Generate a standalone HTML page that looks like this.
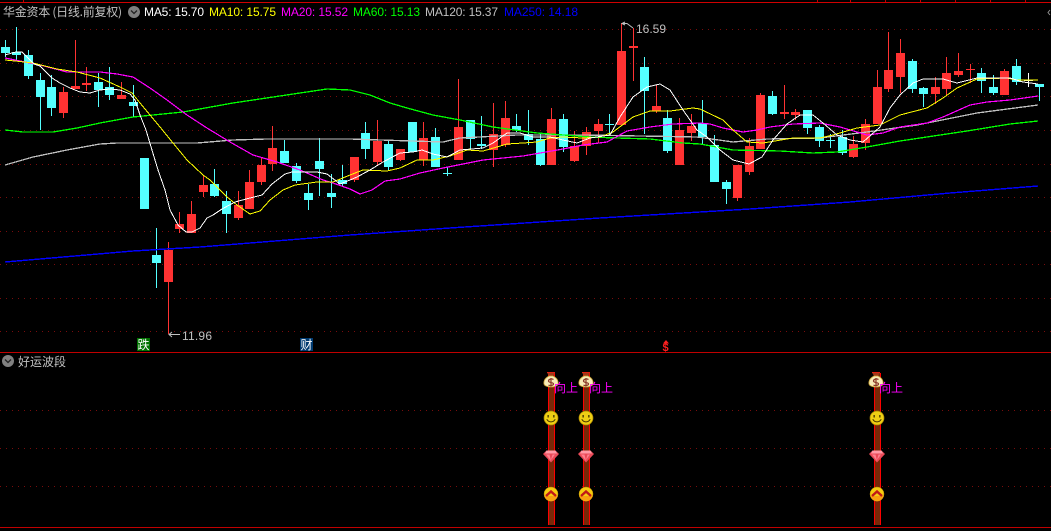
<!DOCTYPE html>
<html><head><meta charset="utf-8">
<style>
html,body{margin:0;padding:0;background:#000;width:1051px;height:531px;overflow:hidden}
svg{position:absolute;left:0;top:0;display:block}
text{font-family:"Liberation Sans","WenQuanYi Zen Hei",sans-serif;font-size:12px}
.cj{font-family:"WenQuanYi Zen Hei","Noto Sans CJK SC",sans-serif}
</style></head>
<body>
<svg width="1051" height="531" viewBox="0 0 1051 531" xmlns="http://www.w3.org/2000/svg">
<defs>
<g id="bag">
<path d="M-4 -9.500H4L2 -6H-2Z" fill="#a03818"/><path d="M-4 -9.500H4" stroke="#e02010" stroke-width="1"/>
<path d="M-2 -6H2C6 -4 7.500 -1 7 2C6 6 -6 6 -7 2C-7.500 -1 -6 -4 -2 -6Z" fill="#f8ecb8" stroke="#c8a030" stroke-width=".8"/>
<path d="M2.500 -2.500C1 -3.500 -2.500 -3 -2.500 -1C-2.500 1 2.500 0 2.500 2C2.500 3.500 -1 4 -2.500 3M0 -4V4.500" fill="none" stroke="#8a3828" stroke-width="1.200"/>
</g>
<g id="smile">
<circle r="7" fill="#efcf14" stroke="#a88400" stroke-width=".7"/>
<rect x="-3.500" y="-3" width="1.300" height="2.500" fill="#403000"/><rect x="2.200" y="-3" width="1.300" height="2.500" fill="#403000"/>
<path d="M-4.200 1.200C-2.500 4.800 2.500 4.800 4.200 1.200" fill="none" stroke="#403000" stroke-width="1"/>
</g>
<g id="gem">
<path d="M-4.500 -5.500H4.500L8 -2L0 6.500L-8 -2Z" fill="#ea4a58"/>
<path d="M-4.500 -5.500H4.500L6 -2.500H-6Z" fill="#ff9aa6"/>
<path d="M-5 -1.500L0 5L-1.500 -1.500ZM1.500 -1.500L0 4L4 -1.500Z" fill="#ff7f8e"/>
</g>
<g id="chev">
<circle r="7" fill="#f6cc10" stroke="#b88a00" stroke-width=".5"/>
<path d="M-6.800 2A7 7 0 0 0 6.800 2Z" fill="#f8a010"/>
<path d="M-5 2L0 -2.500L5 2" fill="none" stroke="#c01818" stroke-width="2.400"/>
</g>
<g id="rod">
<rect x="0" y="0" width="7" height="152" fill="#782808"/>
<rect x="0" y="0" width="1" height="152" fill="#ff0000"/><rect x="6" y="0" width="1" height="152" fill="#ff0000"/>
</g>
</defs>

<!-- frame -->
<rect x="0" y="2" width="1051" height="1" fill="#d00000"/>
<rect x="0" y="352" width="1051" height="1" fill="#c00000"/>
<rect x="0" y="527" width="1051" height="1" fill="#c00000"/>
<path d="M23.500 0V2M817.500 0V2M850.500 0V2M885.500 0V2M920.500 0V2M955.500 0V2M990.500 0V2M1025.500 0V2" stroke="#c00000"/>
<path d="M1050 10L1048 12.500L1050 15" fill="none" stroke="#909090"/>

<!-- grid -->
<path d="M0 29.500H1051M0 63.500H1051M0 96.500H1051M0 130.500H1051M0 164.500H1051M0 197.500H1051M0 231.500H1051M0 264.500H1051M0 298.500H1051M0 331.500H1051M0 410.500H1051M0 448.500H1051M0 486.500H1051" stroke="#7a0c0c" stroke-width="1" stroke-dasharray="1 5" fill="none"/>

<!-- cyan candles -->
<path fill="none" stroke="#54ffff" stroke-width="1" d="M5.500 40V57M16.500 27V60M28.500 50V79M40.500 73V130M51.500 75V116M98.500 73V107M109.500 67V100M133.500 85V117M156.500 228V288M214.500 169V197M226.500 191V233M284.500 140V163M296.500 163V183M308.500 184V210M319.500 138V196M331.500 174V208M342.500 165V187M365.500 122V159M388.500 141V171M412.500 122V152M435.500 128V167M447.500 167V176M470.500 120V149M481.500 116V149M516.500 114V132M528.500 110V145M540.500 134V166M563.500 114V152M609.500 114V135M644.500 57V134M667.500 110V153M702.500 100V144M714.500 135V182M726.500 180V204M772.500 91V115M807.500 110V134M819.500 125V147M830.500 134V148M842.500 130V155M912.500 59V93M923.500 87V107M981.500 68V93M993.500 75V95M1016.500 59V85M1039.500 84V101"/>
<path fill="#54ffff" d="M1 47h9V53h-9zM12 52h9V55h-9zM24 55h9V76h-9zM36 80h9V97h-9zM47 87h9V108h-9zM94 82h9V90h-9zM105 87h9V95h-9zM129 102h9V106h-9zM140 158h9V209h-9zM152 255h9V263h-9zM210 184h9V196h-9zM222 201h9V214h-9zM280 151h9V163h-9zM292 166h9V181h-9zM304 193h9V200h-9zM315 161h9V169h-9zM327 193h9V197h-9zM338 180h9V184h-9zM361 133h9V149h-9zM384 144h9V167h-9zM408 122h9V152h-9zM431 137h9V167h-9zM443 173h9V174h-9zM466 120h9V139h-9zM477 144h9V146h-9zM512 126h9V130h-9zM524 134h9V140h-9zM536 139h9V165h-9zM559 119h9V147h-9zM605 124h9V125h-9zM640 67h9V91h-9zM663 118h9V151h-9zM698 123h9V137h-9zM710 145h9V182h-9zM722 182h9V189h-9zM768 96h9V114h-9zM803 110h9V128h-9zM815 127h9V141h-9zM826 140h9V141h-9zM838 137h9V153h-9zM908 61h9V89h-9zM919 88h9V94h-9zM977 73h9V81h-9zM989 87h9V93h-9zM1012 66h9V82h-9zM1035 84h9V87h-9z"/>

<!-- red candles -->
<path fill="none" stroke="#ff3232" stroke-width="1" d="M63.500 87V118M75.500 40V89M86.500 67V91M121.500 82V99M168.500 242V334M179.500 212V233M191.500 201V233M203.500 175V197M238.500 191V220M249.500 170V209M261.500 158V185M272.500 126V171M354.500 157V182M377.500 120V165M400.500 149V161M423.500 122V166M458.500 79V160M493.500 103V167M505.500 101V147M551.500 108V165M574.500 131V162M586.500 127V155M598.500 119V143M621.500 23V125M633.500 28V81M656.500 85V113M679.500 118V165M691.500 114V141M737.500 165V201M749.500 138V175M760.500 93V149M784.500 85V119M795.500 109V120M853.500 136V158M865.500 119V150M877.500 70V124M888.500 32V92M900.500 39V93M935.500 77V104M946.500 57V95M958.500 53V77M970.500 64V83M1004.500 69V95"/>
<path fill="#ff3232" d="M59 92h9V113h-9zM71 86h9V89h-9zM82 83h9V85h-9zM117 95h9V99h-9zM164 250h9V282h-9zM175 224h9V229h-9zM187 214h9V233h-9zM199 185h9V192h-9zM234 205h9V218h-9zM245 182h9V209h-9zM257 165h9V182h-9zM268 148h9V164h-9zM350 157h9V180h-9zM373 141h9V162h-9zM396 149h9V160h-9zM419 138h9V160h-9zM454 127h9V160h-9zM489 134h9V150h-9zM501 118h9V145h-9zM547 119h9V165h-9zM570 146h9V161h-9zM582 132h9V146h-9zM594 124h9V131h-9zM617 51h9V125h-9zM629 46h9V48h-9zM652 106h9V111h-9zM675 130h9V165h-9zM687 126h9V133h-9zM733 165h9V198h-9zM745 146h9V172h-9zM756 95h9V149h-9zM780 112h9V114h-9zM791 112h9V115h-9zM849 144h9V157h-9zM861 124h9V143h-9zM873 87h9V124h-9zM884 70h9V89h-9zM896 53h9V77h-9zM931 87h9V94h-9zM942 73h9V89h-9zM954 71h9V75h-9zM966 69h9V70h-9zM1000 71h9V95h-9z"/>
<path d="M1028.500 73V87M1024 80.500H1033" stroke="#fff" fill="none"/>

<!-- MA lines -->
<g fill="none" shape-rendering="crispEdges">
<polyline stroke="#0000ff" stroke-width="1.400" points="5,262 133,251 200,247 350,235 450,228 600,218 750,209 850,202 950,193 1038,186"/>
<polyline stroke="#c0c0c0" stroke-width="1.300" points="5,165 33,157 67,150 100,144 117,143 197,143 233,140 267,139 350,139 443,142 460,138 517,135 583,135 697,137 733,142 767,139 820,138 867,132 917,125 977,113 1038,105"/>
<polyline stroke="#00ff00" stroke-width="1.300" points="5,130 23,132 53,132 77,128 100,123 133,117 183,112 233,103 300,93 327,89 350,90 370,95 390,103 407,108 433,115 460,120 493,127 537,133 590,137 617,138 650,139 683,143 700,144 733,150 780,151 813,153 837,152 867,147 900,141 967,131 1010,124 1038,121"/>
<polyline stroke="#ff00ff" stroke-width="1.200" points="5,58 20,61 40,65 67,72 100,72 117,74 133,77 150,88 167,100 187,115 207,128 230,142 253,155 277,162 300,170 323,180 333,183 350,189 360,194 372,190 385,181 400,179 420,173 443,168 483,160 523,156 563,149 583,145 607,142 627,131 650,127 673,124 700,123 710,124 723,128 743,132 757,130 770,127 793,124 820,123 840,127 857,132 867,135 883,133 900,127 927,123 943,117 970,105 987,102 1010,100 1038,96"/>
<polyline stroke="#ffff00" stroke-width="1" points="5,60 15,61 33,63 57,69 77,72 100,78 120,87 132,93 140,103 150,115 160,127 173,143 187,160 203,175 210,180 227,197 237,205 250,214 260,211 270,200 283,190 295,185 317,182 333,182 350,175 363,170 387,171 400,168 417,160 433,160 450,156 467,150 483,151 497,147 507,144 523,143 537,142 550,138 563,137 583,138 600,137 613,132 633,117 650,111 670,111 693,108 700,109 723,120 733,130 747,142 763,143 793,138 820,138 833,135 857,128 880,125 900,115 927,108 943,98 957,88 977,79 1007,78 1017,80 1038,80"/>
<polyline stroke="#ffffff" stroke-width="1" points="5,55 12,53 16,52 22,52 28,58 34,64 40,66 46,72 52,78 60,83 70,88 80,92 90,93 100,90 110,89 120,90 130,94 135,100 140,115 146,130 152,150 158,170 165,190 170,210 178,225 186,232 192,232 200,228 207,218 213,215 222,209 235,202 250,198 262,195 272,184 285,174 292,172 303,172 317,172 327,174 340,184 350,180 357,177 370,170 383,162 400,153 413,152 422,150 433,154 447,157 460,150 483,148 493,143 507,133 520,133 533,137 550,137 563,140 577,143 590,138 610,135 620,117 633,97 647,87 660,84 670,90 683,110 697,130 707,137 720,150 733,160 749,164 762,157 773,140 787,124 800,115 813,115 823,123 837,135 850,140 863,142 880,127 890,108 900,95 913,83 923,79 943,79 957,83 977,78 1010,78 1023,82 1038,84"/>
</g>

<!-- header -->
<text x="3" y="16" fill="#c0c0c0" class="cj" style="font-size:12px" textLength="119" lengthAdjust="spacing">华金资本 (日线.前复权)</text>
<circle cx="134" cy="12" r="6" fill="#808080"/><path d="M131 10.500L134 13.500L137 10.500" fill="none" stroke="#222" stroke-width="1.300"/>
<text x="144" y="16" fill="#ffffff" textLength="60">MA5: 15.70</text>
<text x="209" y="16" fill="#ffff00" textLength="67">MA10: 15.75</text>
<text x="281" y="16" fill="#ff00ff" textLength="67">MA20: 15.52</text>
<text x="353" y="16" fill="#00ff00" textLength="67">MA60: 15.13</text>
<text x="425" y="16" fill="#c0c0c0" textLength="73">MA120: 15.37</text>
<text x="504" y="16" fill="#0000ff" textLength="74">MA250: 14.18</text>

<!-- price annotations -->
<path d="M625 25L622 23.500L625 22M622 23.500H627L633 28" fill="none" stroke="#c0c0c0"/>
<text x="636" y="33" fill="#c0c0c0" textLength="30">16.59</text>
<path d="M172 332L169 334.500L172 337M169 334.500H180" fill="none" stroke="#c0c0c0"/>
<text x="182" y="340" fill="#c0c0c0" textLength="30">11.96</text>

<!-- markers -->
<rect x="137" y="338" width="13" height="13" fill="#007000"/>
<text x="137.500" y="349" fill="#fff" class="cj">跌</text>
<rect x="300" y="338" width="13" height="13" fill="#003a70"/>
<text x="300.500" y="349" fill="#fff" class="cj">财</text>
<path d="M666 340L669 343.500H663Z" fill="#ff2020"/>
<text x="662.500" y="351" fill="#ff2020" style="font-size:11px;font-weight:bold">$</text>

<!-- lower pane -->
<circle cx="8" cy="361" r="6" fill="#808080"/><path d="M5 359.500L8 362.500L11 359.500" fill="none" stroke="#222" stroke-width="1.300"/>
<text x="18" y="366" fill="#c0c0c0" class="cj">好运波段</text>

<use href="#rod" x="548" y="373"/><use href="#rod" x="583" y="373"/><use href="#rod" x="874" y="373"/>
<use href="#bag" x="551" y="382"/><use href="#bag" x="586" y="382"/><use href="#bag" x="876" y="382"/>
<use href="#smile" x="551" y="418"/><use href="#smile" x="586" y="418"/><use href="#smile" x="877" y="418"/>
<use href="#gem" x="551" y="456"/><use href="#gem" x="586" y="456"/><use href="#gem" x="877" y="456"/>
<use href="#chev" x="551" y="494"/><use href="#chev" x="586" y="494"/><use href="#chev" x="877" y="494"/>
<text x="554" y="392" fill="#ff00ff" class="cj">向上</text>
<text x="589" y="392" fill="#ff00ff" class="cj">向上</text>
<text x="879" y="392" fill="#ff00ff" class="cj">向上</text>
</svg>
</body></html>
